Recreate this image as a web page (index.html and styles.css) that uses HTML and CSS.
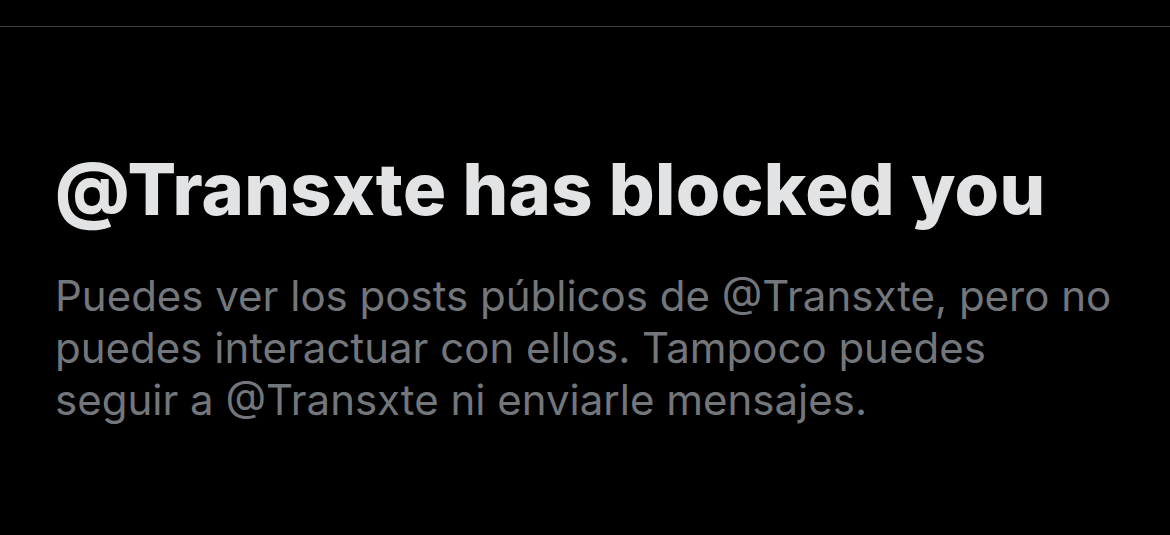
FILE: index.html
```html
<!DOCTYPE html>
<html>
<head>
  <meta charset="UTF-8">
  <title>@Transxte has blocked you</title>
  <link rel="stylesheet" href="styles.css">
</head>
<body>
<div class="topbar"></div>
<div class="blocked">
  <h1 class="blocked-title">@Transxte has blocked you</h1>
  <p class="blocked-text">Puedes ver los posts públicos de @Transxte, pero no<br>
  puedes interactuar con ellos. Tampoco puedes<br>
  seguir a @Transxte ni enviarle mensajes.</p>
</div>
</body>
</html>
```

FILE: styles.css
```css
body {
  margin: 0;
  background-color: #000;
  font-family: Inter, "Liberation Sans", Arial, sans-serif;
  height: 535px;
  overflow: hidden;
}

.topbar {
  height: 26px;
  border-bottom: 1px solid #3a3b3d;
}

.blocked {
  padding: 0 55px;
}

.blocked-title {
  margin: 120px 0 0 0;
  color: #e2e3e4;
  font-size: 72px;
  font-weight: 800;
  letter-spacing: 0.3px;
  line-height: 84px;
}

.blocked-text {
  margin: 39px 0 0 0;
  color: #73777b;
  font-size: 42px;
  line-height: 52px;
}
```
